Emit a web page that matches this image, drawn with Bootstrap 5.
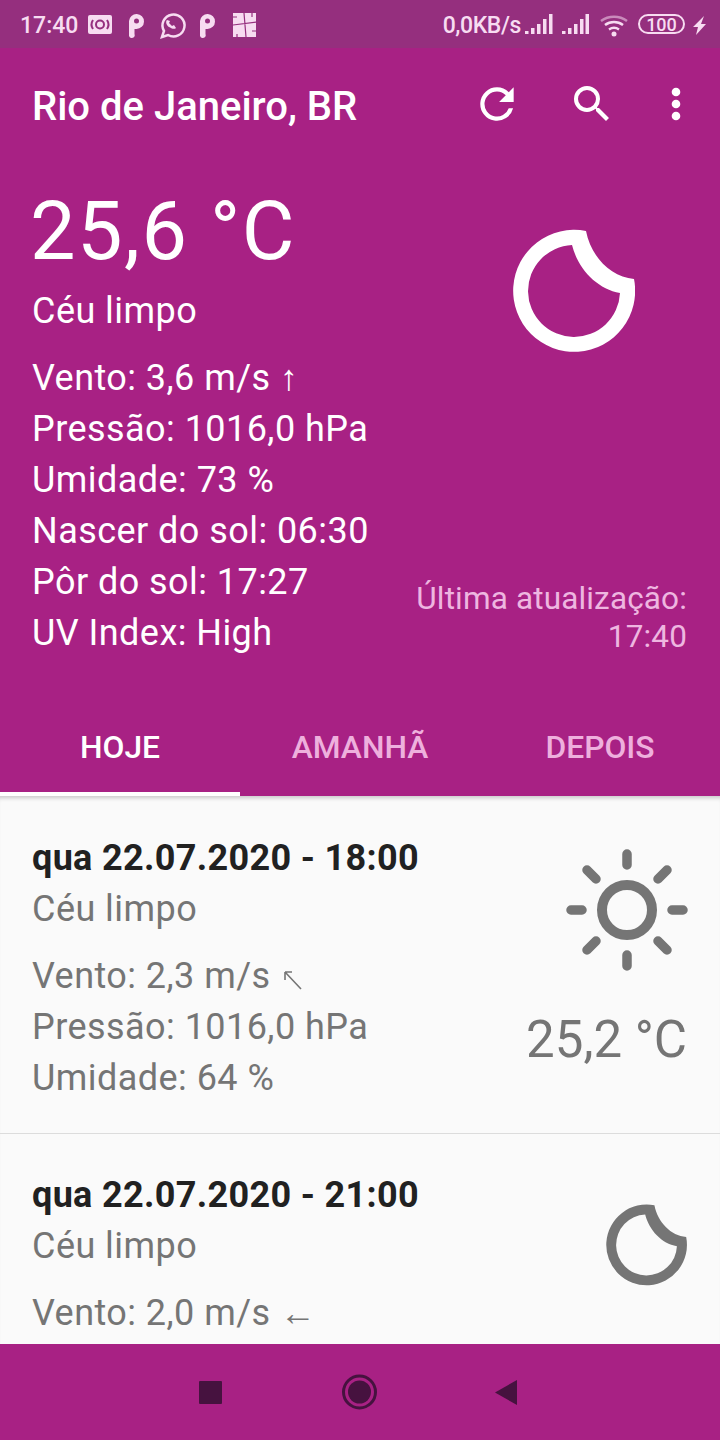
<!DOCTYPE html>
<html lang="pt">
<head>
    <meta charset="UTF-8">
    <meta name="viewport" content="width=device-width, initial-scale=1.0">
    <title>Clima</title>
    <link href="https://cdn.jsdelivr.net/npm/bootstrap@5.3.3/dist/css/bootstrap.min.css" rel="stylesheet">
    <style>
        body { font-family: Roboto, "Liberation Sans", sans-serif; background: #fafafa; }
        .app-screen { width: 720px; height: 1440px; overflow: hidden; }
        .status-strip { height: 48px; background: #952f7e; color: #f7dcf1; font-size: 23px; font-weight: 500; padding: 1px 14px 0 20px; flex: none; }
        .status-text { padding-top: 4px; }
        .net-speed { letter-spacing: -.4px; }
        .weather-head { background: #a82184; color: #fff; height: 748px; flex: none; }
        .title-bar { height: 116px; padding: 0 34px 0 32px; }
        .place-name { font-size: 40px; font-weight: 500; margin: 2px 0 0; line-height: 1; }
        .refresh-icon { margin-right: 46px; margin-bottom: 5px; }
        .search-icon { margin-right: 50px; margin-bottom: 5px; }
        .dots-icon { margin-bottom: 4px; }
        .now-panel { padding: 20px 33px 0 32px; }
        .big-temp { font-size: 81px; line-height: 96px; letter-spacing: 1.5px; margin-left: -2px; }
        .sky-now { font-size: 36px; line-height: 48px; letter-spacing: .45px; margin-top: 7px; }
        .detail-lines { font-size: 36px; line-height: 51px; letter-spacing: .45px; margin-top: 18px; }
        .moon-big { margin-top: 45px; margin-right: 52px; }
        .updated-at { font-size: 31.5px; line-height: 38px; letter-spacing: .15px; color: #eeb6e0; margin-bottom: 40px; }
        .day-tabs a { height: 100px; padding-top: 8px; font-size: 31.8px; font-weight: 500; color: #eeb0dd; text-decoration: none; border-bottom: 4px solid transparent; }
        .day-tabs a.active { color: #fff; border-bottom-color: #fff; }
        .forecast-list { flex: 1 1 0; overflow: hidden; background: #fafafa; box-shadow: inset 0 5px 4px -3px rgba(0,0,0,.2); }
        .forecast-item { background: transparent; border-color: #dcdcdc; border-width: 0 0 2px 0; padding: 37px 33px 30px 32px; height: 338px; color: #757575; }
        .forecast-item + .forecast-item { padding-top: 36px; }
        .when-line { font-size: 36px; font-weight: 700; line-height: 51px; letter-spacing: .33px; color: #212121; }
        .item-lines { font-size: 36px; line-height: 51px; letter-spacing: .45px; }
        .item-gap { margin-top: 16px; }
        .item-temp { font-size: 51px; line-height: 60px; margin-top: 38px; }
        .sun-icon { margin-top: 15px; margin-right: -1px; }
        .moon-small { margin-top: 34px; }
        .wind-mark { margin-left: 3px; vertical-align: -3px; }
        .soft-bar { height: 96px; background: #a82184; flex: none; }
    </style>
</head>

<body>
<div class="app-screen d-flex flex-column">

    <div class="status-strip d-flex align-items-center">
        <span class="status-text">17:40</span>
        <svg class="ms-2" width="170" height="30" viewBox="0 0 170 30">
            <rect x="2" y="5" width="24" height="19" rx="2" fill="#f7dcf1"/>
            <circle cx="14" cy="14.500" r="4" fill="none" stroke="#952f7e" stroke-width="2"/>
            <path d="M7 10c-2 3-2 6 0 9M21 10c2 3 2 6 0 9" fill="none" stroke="#952f7e" stroke-width="2"/>
            <path d="M43 26V11a7.500 7.500 0 1 1 7.500 8h-2v5a2.500 2.500 0 0 1-5.500 2z" fill="#f7dcf1"/>
            <circle cx="50.500" cy="11" r="2.500" fill="#952f7e"/>
            <path d="M76 27l2-6a11 11 0 1 1 4 4z" fill="none" stroke="#f7dcf1" stroke-width="2.500"/>
            <path d="M81 10c-2 2 0 6 2 7s5 3 7 1l-2-3-2 1-3-3 1-2z" fill="#f7dcf1"/>
            <path d="M114 26V11a7.500 7.500 0 1 1 7.500 8h-2v5a2.500 2.500 0 0 1-5.500 2z" fill="#f7dcf1"/>
            <circle cx="121.500" cy="11" r="2.500" fill="#952f7e"/>
            <rect x="147" y="3" width="24" height="24" fill="#f7dcf1"/>
            <path d="M158 3l2 24M147 15l24-3M147 7h4M166 21h5M151 27v-3M166 3v4" stroke="#952f7e" stroke-width="1.200" fill="none"/>
        </svg>
        <span class="ms-auto net-speed status-text">0,0KB/s</span>
        <svg width="185" height="30" viewBox="-2 0 185 30">
            <path d="M2 21h3.500v3H2zM8 18h3.500v6H8zM14 14h3.500v10H14zM20 9h3.500v15H20zM26 4h3.500v20H26zM39 21h3.500v3H39zM45 18h3.500v6H45zM51 14h3.500v10H51zM57 9h3.500v15H57zM62.500 4H66v20h-3.500z" fill="#f7dcf1"/>
            <path d="M78 11a22 22 0 0 1 26 0" fill="none" stroke="#c98abb" stroke-width="2.500"/>
            <path d="M82 15a15 15 0 0 1 18 0M86 19.500a9 9 0 0 1 10 0" fill="none" stroke="#f7dcf1" stroke-width="2.500"/>
            <circle cx="91" cy="24" r="2.500" fill="#f7dcf1"/>
            <rect x="116" y="5" width="45" height="18" rx="9" fill="none" stroke="#f7dcf1" stroke-width="2"/>
            <text x="138.500" y="20.500" font-size="18" font-weight="500" text-anchor="middle" fill="#f7dcf1" font-family="Roboto, sans-serif">100</text>
            <path d="M181 6l-11 11h5l-2 8 10-11h-5z" fill="#f7dcf1"/>
        </svg>
    </div>

    <div class="weather-head d-flex flex-column">
        <div class="title-bar d-flex align-items-center">
            <h1 class="place-name flex-grow-1">Rio de Janeiro, BR</h1>
            <svg class="refresh-icon" width="50" height="50" viewBox="0 0 24 24" fill="#fff"><path d="M17.650 6.350A7.960 7.960 0 0 0 12 4a8 8 0 1 0 7.730 10h-2.080A6 6 0 1 1 12 6c1.660 0 3.140.69 4.220 1.780L13 11h7V4z"/></svg>
            <svg class="search-icon" width="48" height="48" viewBox="0 0 24 24" fill="#fff"><path d="M15.500 14h-.79l-.28-.27A6.470 6.470 0 0 0 16 9.500 6.500 6.500 0 1 0 9.500 16c1.610 0 3.090-.59 4.230-1.570l.27.28v.79l5 4.990L20.490 19zm-6 0a4.500 4.500 0 1 1 0-9 4.500 4.500 0 0 1 0 9z"/></svg>
            <svg class="dots-icon" width="20" height="44" viewBox="0 0 20 44" fill="#fff"><circle cx="10" cy="10" r="4.300"/><circle cx="10" cy="22" r="4.300"/><circle cx="10" cy="34" r="4.300"/></svg>
        </div>

        <div class="now-panel d-flex flex-grow-1">
            <div class="flex-grow-1">
                <div class="big-temp">25,6 °C</div>
                <div class="sky-now">Céu limpo</div>
                <div class="detail-lines">
                    <div>Vento: 3,6 m/s ↑</div>
                    <div>Pressão: 1016,0 hPa</div>
                    <div>Umidade: 73 %</div>
                    <div>Nascer do sol: 06:30</div>
                    <div>Pôr do sol: 17:27</div>
                    <div>UV Index: High</div>
                </div>
            </div>
            <div class="d-flex flex-column align-items-end">
                <svg class="moon-big" width="122" height="124" viewBox="0 0 122 124"><path fill="#fff" fill-rule="evenodd" d="M73 2A61 61 0 1 0 121 50C98 48 78 28 73 2zM59 16C65 40 84 60 107 64A46 46 0 1 1 59 16z"/></svg>
                <div class="updated-at text-end mt-auto">Última atualização:<br>17:40</div>
            </div>
        </div>

        <div class="day-tabs row g-0">
            <a class="col-4 d-flex align-items-center justify-content-center active" href="#">HOJE</a>
            <a class="col-4 d-flex align-items-center justify-content-center" href="#">AMANHÃ</a>
            <a class="col-4 d-flex align-items-center justify-content-center" href="#">DEPOIS</a>
        </div>
    </div>

    <div class="forecast-list list-group list-group-flush rounded-0">
        <div class="forecast-item list-group-item d-flex">
            <div class="flex-grow-1">
                <div class="when-line">qua 22.07.2020 - 18:00</div>
                <div class="item-lines">Céu limpo</div>
                <div class="item-lines item-gap">
                    <div>Vento: 2,3 m/s <svg class="wind-mark" width="20" height="22" viewBox="0 0 20 22" fill="none" stroke="#757575" stroke-width="1.600"><path d="M2 3l16 17M2 3h7M2 3v8"/></svg></div>
                    <div>Pressão: 1016,0 hPa</div>
                    <div>Umidade: 64 %</div>
                </div>
            </div>
            <div class="d-flex flex-column align-items-end">
                <svg class="sun-icon" width="122" height="124" viewBox="1 0 122 124" fill="none" stroke="#757575" stroke-linecap="round">
                    <circle cx="62" cy="62" r="25" stroke-width="10"/>
                    <path stroke-width="9.500" d="M62 6v11M62 107v11M6 62h11M107 62h11M22 22l9 9M102 22l-9 9M22 102l9-9M102 102l-9-9"/>
                </svg>
                <div class="item-temp">25,2 °C</div>
            </div>
        </div>
        <div class="forecast-item list-group-item d-flex">
            <div class="flex-grow-1">
                <div class="when-line">qua 22.07.2020 - 21:00</div>
                <div class="item-lines">Céu limpo</div>
                <div class="item-lines item-gap">
                    <div>Vento: 2,0 m/s ←</div>
                </div>
            </div>
            <svg class="moon-small" width="81" height="82" viewBox="0 0 122 124"><path fill="#757575" fill-rule="evenodd" d="M73 2A61 61 0 1 0 121 50C98 48 78 28 73 2zM59 16C65 40 84 60 107 64A46 46 0 1 1 59 16z"/></svg>
        </div>
    </div>

    <div class="soft-bar d-flex align-items-center justify-content-center">
        <svg width="340" height="40" viewBox="0 0 340 40" fill="#46123f">
            <rect x="9" y="9" width="23" height="23" rx="1"/>
            <circle cx="169.500" cy="20" r="16" fill="none" stroke="#46123f" stroke-width="3"/>
            <circle cx="169.500" cy="20" r="11.500"/>
            <path d="M327 8v25l-22-12.500z"/>
        </svg>
    </div>
</div>
<script src="https://cdn.jsdelivr.net/npm/bootstrap@5.3.3/dist/js/bootstrap.bundle.min.js"></script>
</body>
</html>
